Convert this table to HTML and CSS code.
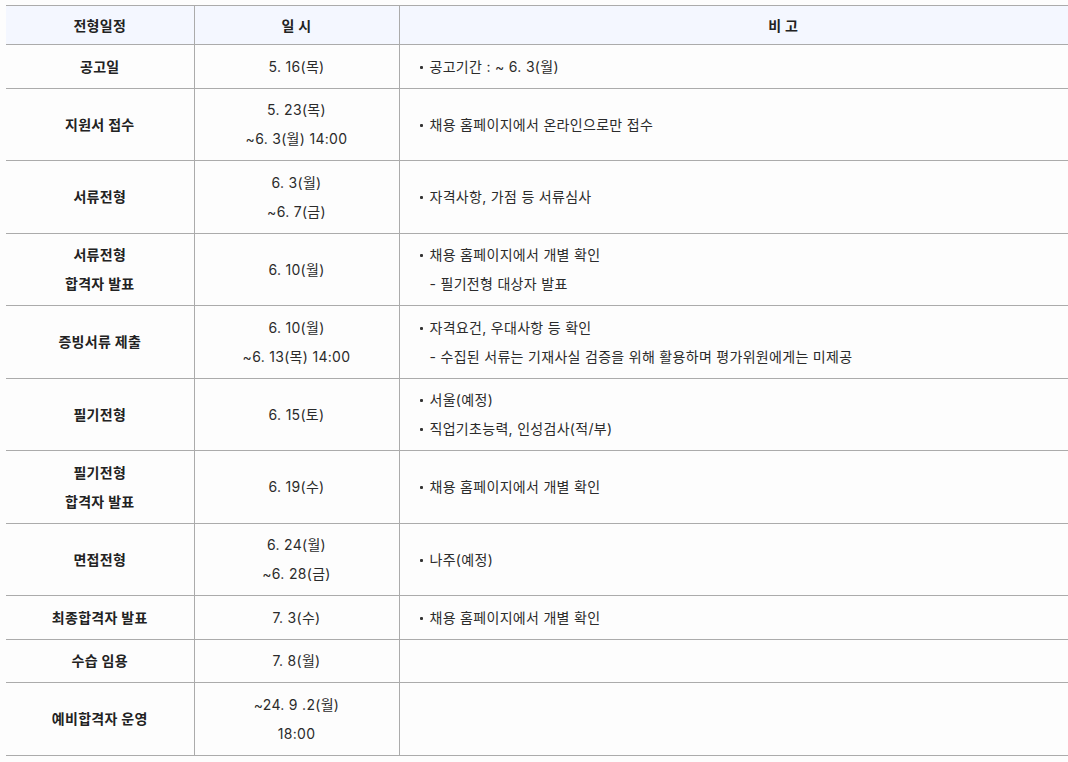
FILE: index.html
```html
<!DOCTYPE html>
<html lang="ko">
<head>
<meta charset="utf-8">
<link rel="stylesheet" href="styles.css">
</head>
<body>
<table class="schedule">
  <colgroup>
    <col class="c1"><col class="c2"><col class="c3">
  </colgroup>
  <thead>
    <tr><th>전형일정</th><th>일 시</th><th>비 고</th></tr>
  </thead>
  <tbody>
    <tr>
      <td class="step">공고일</td>
      <td class="date">5. 16(목)</td>
      <td class="note"><ul><li>공고기간 : ~ 6. 3(월)</li></ul></td>
    </tr>
    <tr>
      <td class="step">지원서 접수</td>
      <td class="date">5. 23(목)<br>~6. 3(월) 14:00</td>
      <td class="note"><ul><li>채용 홈페이지에서 온라인으로만 접수</li></ul></td>
    </tr>
    <tr>
      <td class="step">서류전형</td>
      <td class="date">6. 3(월)<br>~6. 7(금)</td>
      <td class="note"><ul><li>자격사항, 가점 등 서류심사</li></ul></td>
    </tr>
    <tr>
      <td class="step">서류전형<br>합격자 발표</td>
      <td class="date">6. 10(월)</td>
      <td class="note"><ul><li>채용 홈페이지에서 개별 확인</li><li class="sub">- 필기전형 대상자 발표</li></ul></td>
    </tr>
    <tr>
      <td class="step">증빙서류 제출</td>
      <td class="date">6. 10(월)<br>~6. 13(목) 14:00</td>
      <td class="note"><ul><li>자격요건, 우대사항 등 확인</li><li class="sub">- 수집된 서류는 기재사실 검증을 위해 활용하며 평가위원에게는 미제공</li></ul></td>
    </tr>
    <tr>
      <td class="step">필기전형</td>
      <td class="date">6. 15(토)</td>
      <td class="note"><ul><li>서울(예정)</li><li>직업기초능력, 인성검사(적/부)</li></ul></td>
    </tr>
    <tr>
      <td class="step">필기전형<br>합격자 발표</td>
      <td class="date">6. 19(수)</td>
      <td class="note"><ul><li>채용 홈페이지에서 개별 확인</li></ul></td>
    </tr>
    <tr>
      <td class="step">면접전형</td>
      <td class="date">6. 24(월)<br>~6. 28(금)</td>
      <td class="note"><ul><li>나주(예정)</li></ul></td>
    </tr>
    <tr>
      <td class="step">최종합격자 발표</td>
      <td class="date">7. 3(수)</td>
      <td class="note"><ul><li>채용 홈페이지에서 개별 확인</li></ul></td>
    </tr>
    <tr>
      <td class="step">수습 임용</td>
      <td class="date">7. 8(월)</td>
      <td class="note"></td>
    </tr>
    <tr>
      <td class="step">예비합격자 운영</td>
      <td class="date">~24. 9 .2(월)<br>18:00</td>
      <td class="note"></td>
    </tr>
  </tbody>
</table>
</body>
</html>
```

FILE: styles.css
```css
html, body {
  margin: 0;
  padding: 0;
  background: #fdfdfd;
}
body {
  padding: 5px 0 0 6px;
  font-family: Inter, "Noto Sans CJK KR", sans-serif;
  font-size: 14px;
  color: #2b2b2b;
  overflow: hidden;
  width: 1200px;
}
.schedule {
  border-collapse: collapse;
  table-layout: fixed;
  width: 1161px;
  letter-spacing: 0.3px;
}
.c1 { width: 188px; }
.c2 { width: 205px; }
.c3 { width: 768px; }
.schedule th,
.schedule td {
  border-top: 1px solid #ababab;
  border-bottom: 1px solid #ababab;
  border-left: 1px solid #ababab;
  line-height: 29px;
  padding: 6.75px 0;
  vertical-align: middle;
}
.schedule th:first-child,
.schedule td:first-child {
  border-left: none;
}
.schedule th {
  background: #f4f7ff;
  font-weight: 700;
  color: #222;
  padding: 4.5px 0;
  text-align: center;
}
.step {
  text-align: center;
  font-weight: 700;
  color: #222;
}
.date {
  text-align: center;
}
.date,
.note {
  padding-top: 6px;
  padding-bottom: 7.5px;
}
.note {
  text-align: left;
}
.note ul {
  list-style: none;
  margin: 0;
  padding: 0 0 0 30px;
}
.note li {
  position: relative;
}
.note li::before {
  content: "";
  position: absolute;
  left: -10px;
  top: 14px;
  width: 3px;
  height: 3px;
  border-radius: 1px;
  background: #333;
}
.note li.sub::before {
  display: none;
}
```
